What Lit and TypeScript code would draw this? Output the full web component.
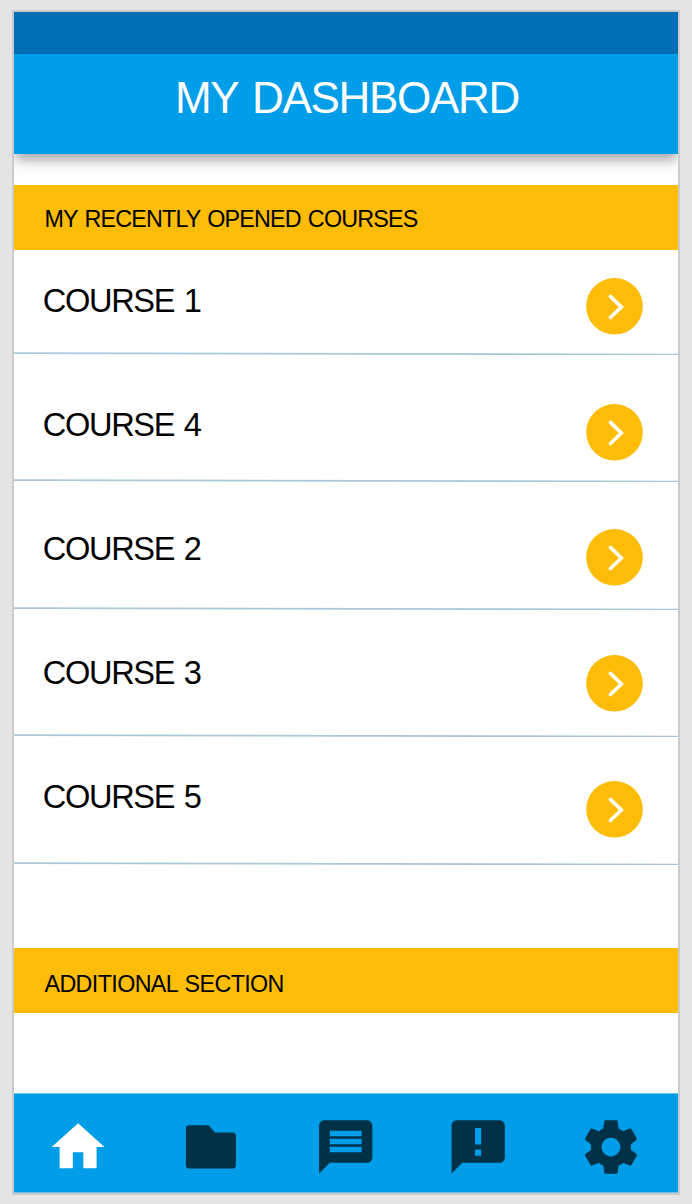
import { LitElement, html, svg, css } from "lit";
import { customElement, property } from "lit/decorators.js";

interface Course {
  name: string;
  height: number;
  textTop: number;
  buttonTop: number;
}

const COURSES: Course[] = [
  { name: "COURSE 1", height: 105, textTop: 31, buttonTop: 28 },
  { name: "COURSE 4", height: 127.4, textTop: 50, buttonTop: 48.8 },
  { name: "COURSE 2", height: 127.4, textTop: 46.6, buttonTop: 47.1 },
  { name: "COURSE 3", height: 127.4, textTop: 43.2, buttonTop: 45.2 },
  { name: "COURSE 5", height: 127.4, textTop: 39.8, buttonTop: 43.5 },
];

const ICONS = {
  home: svg`<path transform="translate(.42 .4) scale(2.64)" d="M10 20v-6h4v6h5v-8h3L12 3 2 12h3v8z"/>`,
  folder: svg`<path d="M10 10.3H28.4Q29.6 10.3 30.4 11.2L36 17.6H53.8Q56.9 17.6 56.9 20.7V50.3Q56.9 53.4 53.8 53.4H10Q6.9 53.4 6.9 50.3V13.4Q6.9 10.3 10 10.3Z"/>`,
  chat: svg`<path transform="translate(1.8 -.1) scale(2.66)" fill-rule="evenodd" d="M20 2H4c-1.1 0-2 .9-2 2v18l4-4h14c1.1 0 2-.9 2-2V4c0-1.1-.9-2-2-2zM6 6h12v2H6zM6 9h12v2H6zM6 12h12v2H6z"/>`,
  feedback: svg`<path transform="translate(.3 -.1) scale(2.66)" fill-rule="evenodd" d="M20 2H4c-1.1 0-2 .9-2 2v18l4-4h14c1.1 0 2-.9 2-2V4c0-1.1-.9-2-2-2zM10.8 4.9h2.3v6.2h-2.3zM10.8 13h2.3v2.4h-2.3z"/>`,
  settings: svg`<path transform="translate(-.1 0) scale(2.67)" d="M19.43 12.98c.04-.32.07-.64.07-.98s-.03-.66-.07-.98l2.11-1.65c.19-.15.24-.42.12-.64l-2-3.46c-.12-.22-.39-.3-.61-.22l-2.49 1c-.52-.4-1.08-.73-1.69-.98l-.38-2.65C14.46 2.18 14.25 2 14 2h-4c-.25 0-.46.18-.49.42l-.38 2.65c-.61.25-1.17.59-1.69.98l-2.49-1c-.23-.09-.49 0-.61.22l-2 3.46c-.13.22-.07.49.12.64l2.11 1.65c-.04.32-.07.65-.07.98s.03.66.07.98l-2.11 1.65c-.19.15-.24.42-.12.64l2 3.46c.12.22.39.3.61.22l2.49-1c.52.4 1.08.73 1.69.98l.38 2.65c.03.24.24.42.49.42h4c.25 0 .46-.18.49-.42l.38-2.65c.61-.25 1.17-.59 1.69-.98l2.49 1c.23.09.49 0 .61-.22l2-3.46c.12-.22.07-.49-.12-.64l-2.11-1.65zM12 15.5c-1.93 0-3.5-1.57-3.5-3.5s1.57-3.5 3.5-3.5 3.5 1.57 3.5 3.5-1.57 3.5-3.5 3.5z"/>`,
};

@customElement("course-row")
class CourseRow extends LitElement {
  @property({ attribute: false }) course!: Course;

  static styles = css`
    :host { display: block; }
    .row {
      display: grid;
      grid-template-columns: 1fr auto;
      grid-template-rows: 1fr 4px;
      align-items: start;
      box-sizing: border-box;
    }
    .name {
      padding-left: 28.8px;
      font-size: 32.6px;
      line-height: 40px;
      letter-spacing: -1.35px;
      word-spacing: 2px;
      color: #000;
    }
    .go { display: block; width: 57px; height: 57px; margin-right: 35px; }
    .line { display: block; grid-column: 1 / 3; width: 664px; height: 4px; }
  `;

  render() {
    const c = this.course;
    return html`<div class="row" style="height:${c.height}px">
      <div class="name" style="margin-top:${c.textTop}px">${c.name}</div>
      <svg class="go" style="margin-top:${c.buttonTop}px" viewBox="0 0 57 57">
        <circle cx="28.5" cy="28.3" r="28.3" fill="#fdbc05" />
        <path d="M24.4 18.4L35.4 29L24.4 39.5" fill="none" stroke="#fff" stroke-width="3.6" stroke-linecap="round" />
      </svg>
      <svg class="line" viewBox="0 0 664 4">
        <path d="M0 2.1L664 3.6" stroke="#aac8d8" stroke-width="1.7" />
      </svg>
    </div>`;
  }
}

@customElement("app-root")
class AppRoot extends LitElement {
  static styles = css`
    :host {
      display: block;
      box-sizing: border-box;
      width: 692px;
      height: 1204px;
      padding: 10px 12px 9px;
      background: #e4e4e4;
      font-family: "Liberation Sans", Arial, sans-serif;
    }
    .phone {
      display: flex;
      flex-direction: column;
      box-sizing: border-box;
      width: 668px;
      height: 1185px;
      border: 2px solid #cbcbcb;
      background: #fff;
      overflow: hidden;
    }
    .status { flex: none; height: 42.4px; background: #006fb5; }
    .header {
      flex: none;
      height: 99.2px;
      box-sizing: border-box;
      padding: 19px 0 0 2px;
      background: #009de8;
      box-shadow: 0 7px 12px -1px rgba(0, 0, 0, 0.36);
      color: #fff;
      font-size: 44px;
      line-height: 50px;
      letter-spacing: -1.3px;
      word-spacing: 3.4px;
      text-align: center;
    }
    .section {
      flex: none;
      box-sizing: border-box;
      height: 64.6px;
      padding: 20px 0 0 30.5px;
      background: #fdbc05;
      color: #000;
      font-size: 23.3px;
      line-height: 28px;
      letter-spacing: -0.82px;
      word-spacing: 1.5px;
    }
    .recent { margin-top: 31.8px; }
    .extra { margin-top: 83.5px; padding-top: 22px; letter-spacing: -0.62px; }
    .nav {
      flex: none;
      display: flex;
      gap: 69.2px;
      box-sizing: border-box;
      height: 100px;
      margin-top: auto;
      padding: 21.2px 0 0 32px;
      border-top: 1px solid #6ac4f0;
      border-bottom: 1px solid #6fbfe8;
      background: #009de8;
    }
    .icon { flex: none; width: 64px; height: 64px; fill: #013147; }
    .active { fill: #fff; }
  `;

  render() {
    return html`<div class="phone">
      <div class="status"></div>
      <div class="header">MY DASHBOARD</div>
      <div class="section recent">MY RECENTLY OPENED COURSES</div>
      ${COURSES.map((c) => html`<course-row .course=${c}></course-row>`)}
      <div class="section extra">ADDITIONAL SECTION</div>
      <div class="nav">
        <svg class="icon active" viewBox="0 0 64 64">${ICONS.home}</svg>
        <svg class="icon" viewBox="0 0 64 64">${ICONS.folder}</svg>
        <svg class="icon" viewBox="0 0 64 64">${ICONS.chat}</svg>
        <svg class="icon" viewBox="0 0 64 64">${ICONS.feedback}</svg>
        <svg class="icon" viewBox="0 0 64 64">${ICONS.settings}</svg>
      </div>
    </div>`;
  }
}
